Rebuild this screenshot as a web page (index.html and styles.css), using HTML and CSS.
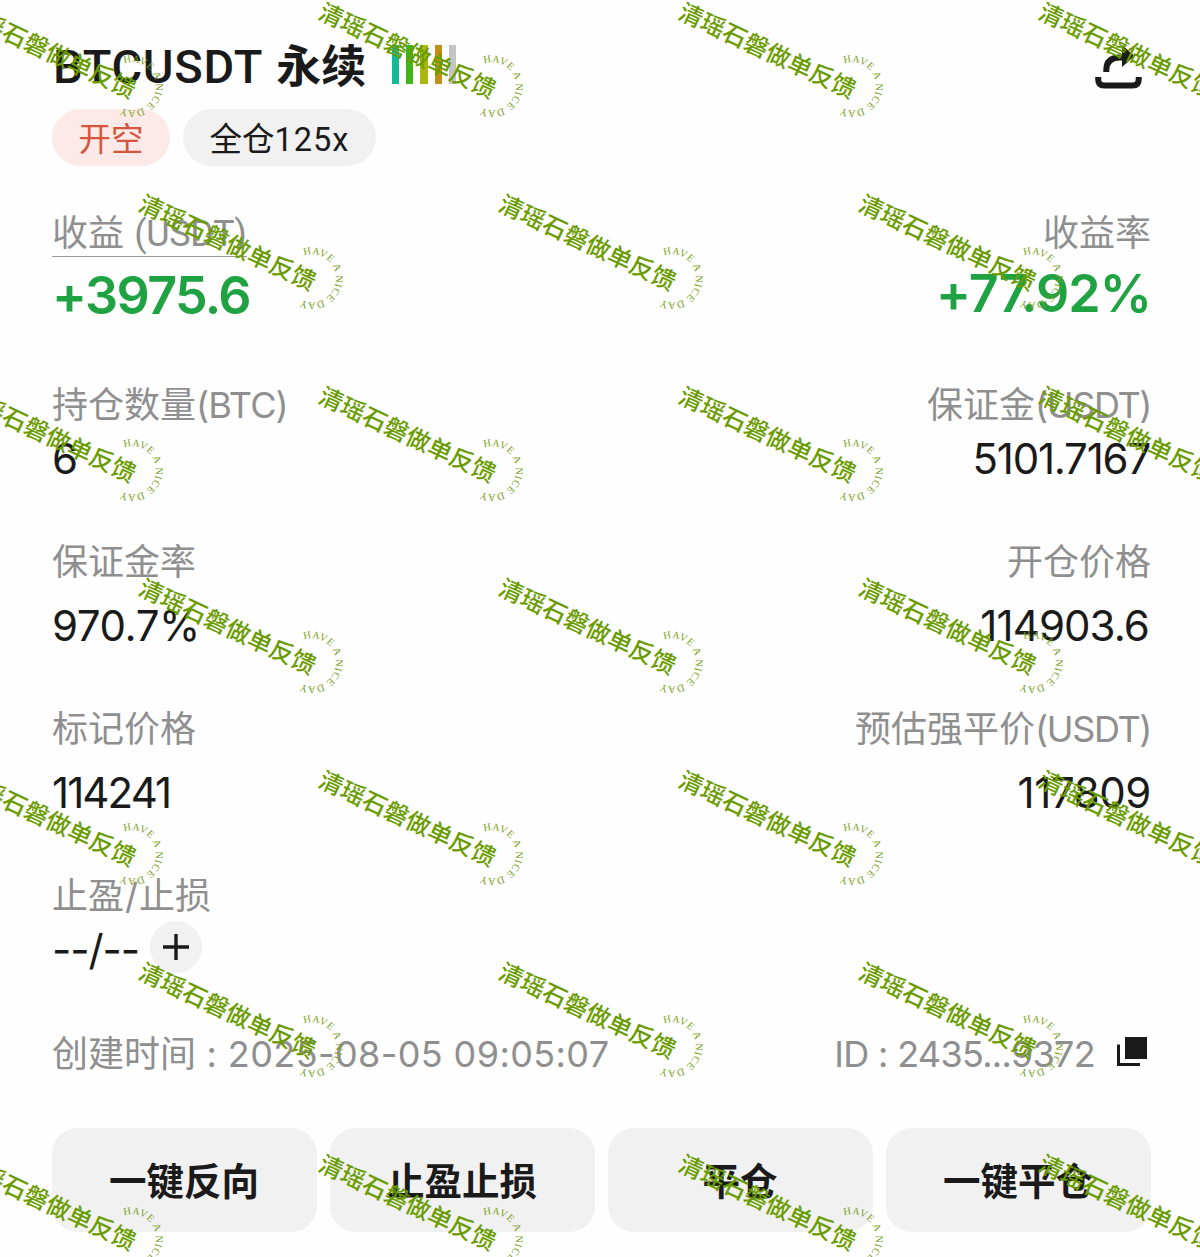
FILE: index.html
```html
<!DOCTYPE html>
<html lang="zh-CN">
<head>
<meta charset="utf-8">
<title>BTCUSDT 永续</title>
<link rel="stylesheet" href="styles.css">
</head>
<body>
<main class="position">
  <header class="head">
    <h1 class="title"><span class="pair">BTCUSDT</span> 永续</h1>
    <div class="bars"><i class="bar teal"></i><i class="bar green"></i><i class="bar lime"></i><i class="bar amber"></i><i class="bar grey"></i></div>
    <svg class="share" width="48" height="46" viewBox="0 0 48 46">
      <path d="M3.200 33v2.500q0 6 6 6h28.500q6 0 6-6V33" fill="none" stroke="#1a1a1a" stroke-width="6"/>
      <path d="M11.300 28v-2Q11.300 13.500 25 13.500H30" fill="none" stroke="#1a1a1a" stroke-width="6"/>
      <path d="M27 1L39.500 12L27 23z" fill="#1a1a1a"/>
    </svg>
  </header>
  <div class="tags"><span class="tag short">开空</span><span class="tag mode">全仓<span class="lever">125x</span></span></div>

  <section class="row pnl">
    <div class="cell"><div class="label underlined">收益 <span class="unit">(USDT)</span></div><div class="value big gain">+3975.6</div></div>
    <div class="cell end"><div class="label">收益率</div><div class="value big rate">+77.92%</div></div>
  </section>
  <section class="row size">
    <div class="cell"><div class="label">持仓数量<span class="btc">(BTC)</span></div><div class="value">6</div></div>
    <div class="cell end"><div class="label">保证金<span class="usdt">(USDT)</span></div><div class="value margin">5101.7167</div></div>
  </section>
  <section class="row ratio">
    <div class="cell"><div class="label">保证金率</div><div class="value percent">970.7%</div></div>
    <div class="cell end"><div class="label">开仓价格</div><div class="value entry">114903.6</div></div>
  </section>
  <section class="row mark">
    <div class="cell"><div class="label">标记价格</div><div class="value price">114241</div></div>
    <div class="cell end"><div class="label">预估强平价<span class="usdt">(USDT)</span></div><div class="value liq">117809</div></div>
  </section>
  <section class="row stops">
    <div class="cell"><div class="label">止盈<span class="slash">/</span>止损</div>
      <div class="stop-line"><span class="value dashes">--/--</span>
        <span class="add"><svg width="26" height="26" viewBox="0 0 26 26"><path d="M13 0v26M0 13h26" stroke="#1a1a1a" stroke-width="3.400"/></svg></span>
      </div>
    </div>
  </section>
  <section class="meta">
    <div class="label created">创建时间<span class="time"> : 2025-08-05 09:05:07</span></div>
    <div class="order"><span class="label id">ID : 2435...9372</span>
      <svg width="30" height="30" viewBox="0 0 30 30"><path d="M8 0h22v22H8z" fill="#1a1a1a"/><path d="M1.500 7.500v20h21.500" fill="none" stroke="#1a1a1a" stroke-width="3"/></svg>
    </div>
  </section>
  <nav class="actions"><button>一键反向</button><button>止盈止损</button><button>平仓</button><button>一键平仓</button></nav>
</main>

<svg class="watermarks" width="1200" height="1257" viewBox="0 0 1200 1257">
  <defs>
    <path id="ring" d="M167.200 63.600A24 24 0 1 1 162.300 106.700"/>
    <g id="mark">
      <text class="mark-name" transform="translate(-0.300 18) rotate(25)" textLength="192">清瑶石磐做单反馈</text>
      <text class="mark-ring"><textPath href="#ring" textLength="94">HAVE A NICE DAY</textPath></text>
    </g>
  </defs>
  <use href="#mark" x="-43"/><use href="#mark" x="317"/><use href="#mark" x="677"/><use href="#mark" x="1037"/>
  <use href="#mark" x="137" y="192"/><use href="#mark" x="497" y="192"/><use href="#mark" x="857" y="192"/>
  <use href="#mark" x="-43" y="384"/><use href="#mark" x="317" y="384"/><use href="#mark" x="677" y="384"/><use href="#mark" x="1037" y="384"/>
  <use href="#mark" x="137" y="576"/><use href="#mark" x="497" y="576"/><use href="#mark" x="857" y="576"/>
  <use href="#mark" x="-43" y="768"/><use href="#mark" x="317" y="768"/><use href="#mark" x="677" y="768"/><use href="#mark" x="1037" y="768"/>
  <use href="#mark" x="137" y="960"/><use href="#mark" x="497" y="960"/><use href="#mark" x="857" y="960"/>
  <use href="#mark" x="-43" y="1152"/><use href="#mark" x="317" y="1152"/><use href="#mark" x="677" y="1152"/><use href="#mark" x="1037" y="1152"/>
</svg>
</body>
</html>
```
FILE: styles.css
```css
* { box-sizing: border-box; }
body {
  margin: 0;
  position: relative;
  width: 1200px;
  height: 1257px;
  overflow: hidden;
  background: #fefefe;
  color: #1a1a1a;
  font-family: Inter, "Noto Sans CJK SC", sans-serif;
}
.position { padding: 36px 49px 0 52px; }
.head { display: flex; height: 60px; }
.title {
  margin: 0;
  width: 340px;
  font: 700 45px/62px Roboto, "Noto Sans CJK SC", sans-serif;
  white-space: nowrap;
}
.pair { margin: 0 2px 0 1px; font-size: 47px; font-weight: 500; letter-spacing: 0.700px; }
.bars { display: flex; gap: 7px; padding-top: 9px; }
.bar { width: 7.200px; height: 39px; }
.teal { background: #18b894; }
.green { background: #3fb618; }
.lime { background: #a8b80c; }
.amber { background: #c09018; }
.grey { background: #c4c4c4; }
.share { margin: 8px 8px 0 auto; }

.tags { display: flex; gap: 13px; margin-top: 13px; }
.tag {
  height: 57px;
  border-radius: 29px;
  font: 400 32.500px/62px Roboto, "Noto Sans CJK SC", sans-serif;
  text-align: center;
  white-space: nowrap;
}
.short { width: 118px; background: #fdeae8; color: #d6553c; }
.mode { width: 193px; background: #f1f1f1; }
.lever { letter-spacing: 1px; }

.row { display: flex; justify-content: space-between; }
.cell { display: flex; flex-direction: column; align-items: flex-start; }
.end { align-items: flex-end; }
.label {
  height: 48px;
  color: #8f8f8f;
  font-size: 36px;
  line-height: 50px;
  white-space: nowrap;
}
.btc { letter-spacing: -0.900px; }
.usdt { letter-spacing: -1.400px; }
.slash { padding: 0 1px; }
.value { font-size: 42px; line-height: 61px; height: 56px; white-space: nowrap; }
.big { color: #1fa342; font-size: 52px; font-weight: 600; line-height: 64px; height: 60px; margin-top: 8px; }
.gain { letter-spacing: -1.600px; }
.rate { margin-top: 6px; letter-spacing: -1px; }
.underlined { height: 49px; border-bottom: 1px solid #999; }
.underlined + .big { margin-top: 7px; }
.unit { font-family: Roboto, sans-serif; letter-spacing: -0.300px; }
.pnl { margin-top: 42px; height: 172px; }
.size { height: 157px; }
.ratio { height: 167px; }
.mark { height: 167px; }
.ratio .value, .mark .value { margin-top: 10px; }
.margin { margin-right: 1px; letter-spacing: -1.200px; }
.percent { letter-spacing: -0.400px; }
.entry { margin-right: 2px; letter-spacing: -0.900px; }
.price { letter-spacing: -1.900px; }
.liq { letter-spacing: -0.400px; }
.stops { height: 157px; }
.stop-line { display: flex; align-items: center; height: 52px; margin-top: 2px; gap: 11px; }
.dashes { width: 87px; letter-spacing: -1.100px; }
.add {
  display: flex;
  align-items: center;
  justify-content: center;
  width: 52px;
  height: 52px;
  border-radius: 50%;
  background: #f1f1f1;
}

.meta { display: flex; justify-content: space-between; height: 100px; padding-top: 1px; }
.time { letter-spacing: 0.400px; }
.order { display: flex; gap: 22px; padding-right: 4px; }
.order svg { margin-top: 8px; }
.id { letter-spacing: -0.700px; }

.actions { display: grid; grid-template-columns: repeat(4, 1fr); gap: 13px; }
.actions button {
  height: 104px;
  border: 0;
  padding: 0 1px 2px 0;
  border-radius: 26px;
  background: #f1f1f1;
  color: #1a1a1a;
  font: 700 37.500px/50px "Noto Sans CJK SC", sans-serif;
}

.watermarks { position: absolute; left: 0; top: 0; pointer-events: none; }
.mark-name { fill: #6a9c00; font: 500 24px "Noto Sans CJK SC", sans-serif; }
.mark-ring { fill: #7a9f1c; font: 10.300px "Liberation Serif", serif; }
```
